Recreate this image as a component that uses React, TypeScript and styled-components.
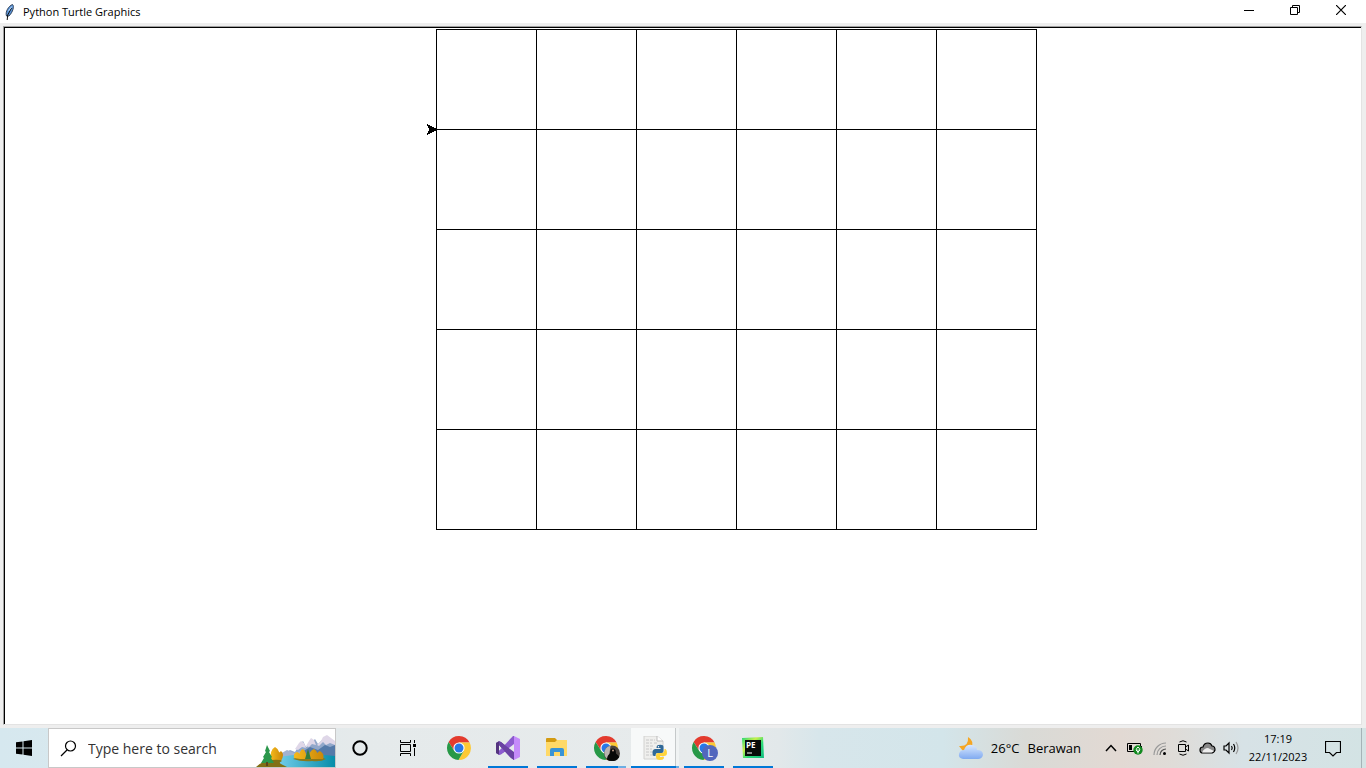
import React from "react";
import styled, { createGlobalStyle } from "styled-components";

const GlobalStyle = createGlobalStyle`
  * { box-sizing: border-box; }
  body { margin: 0; background: #fff; font-family: "Open Sans", "Noto Sans", sans-serif; color: #000; }
  button { font: inherit; color: inherit; border: 0; padding: 0; background: transparent; }
  svg { display: block; flex: none; }
`;

const Desktop = styled.div`
  min-height: 100vh;
  display: flex;
  flex-direction: column;
`;

const AppWindow = styled.main`
  flex: 1;
  display: flex;
  flex-direction: column;
  background: #eee;
`;

const TitleBar = styled.header`
  height: 23px;
  display: flex;
  align-items: center;
  background: #fff;
  padding: 0 2px 0 4px;
`;

const Title = styled.h1`
  flex: 1;
  margin: 0 0 0 7px;
  font-size: 11px;
  line-height: 16px;
  font-weight: 400;
`;

const WindowButton = styled.button`
  width: 46px;
  height: 23px;
  display: flex;
  align-items: center;
  justify-content: center;
  padding-bottom: 3px;
`;

const Canvas = styled.section`
  flex: 1;
  margin: 3px 4px 3px 3px;
  border: 1px solid #a0a0a0;
  border-right-color: #e3e3e3;
  border-bottom-color: #e3e3e3;
  background: #fff;
  display: flex;
`;

const Surface = styled.div`
  flex: 1;
  border-top: 1px solid #000;
  border-left: 1px solid #000;
  padding-left: 97px;
  display: flex;
  justify-content: center;
`;

const TaskBar = styled.footer`
  height: 40px;
  display: flex;
  background: linear-gradient(90deg, #d6e8ef 0%, #dce9ed 15%, #e5eaeb 26%, #e7ebec 52%, #e2e8ea 57%, #d7e6eb 60%, #d3e5ea 69%, #d9dad6 75%, #e2d9d3 82%, #dfdcd8 86%, #d7e2e6 91%, #d3e3e4 100%);
`;

const BarButton = styled.button`
  width: 48px;
  height: 40px;
  display: flex;
  align-items: center;
  justify-content: center;
`;

const NotificationButton = styled(BarButton)`
  width: 40px;
  margin-right: 8px;
`;

const SearchBox = styled.label`
  width: 288px;
  height: 40px;
  display: flex;
  align-items: center;
  background: #fff;
  border: 1px solid #c8c8c8;
  padding-left: 11px;
`;

const SearchInput = styled.input`
  flex: 1;
  min-width: 0;
  border: 0;
  outline: 0;
  padding: 2px 0 0;
  margin-left: 11px;
  background: transparent;
  font: 14px/20px "Open Sans", "Noto Sans", sans-serif;
  &::placeholder { color: #333; opacity: 1; }
`;

const SearchArt = styled.span`
  align-self: flex-end;
`;

const TaskList = styled.nav`
  display: flex;
  gap: 1px;
  padding-left: 3px;
  flex: 1;
`;

type TaskState = "idle" | "running" | "grouped" | "active";

const underline = {
  idle: "none",
  running: "linear-gradient(90deg, transparent 4px, #0078d7 4px 44px, transparent 44px)",
  grouped: "linear-gradient(90deg, transparent 4px, #0078d7 4px 36px, #6caee3 36px 44px, transparent 44px)",
  active: "linear-gradient(90deg, #0078d7 45px, #6caee3 45px)",
};

const TaskButton = styled(BarButton)<{ $state: TaskState }>`
  background:
    ${({ $state }) => underline[$state]} bottom / 100% 2px no-repeat,
    ${({ $state }) => ($state === "active" ? "linear-gradient(90deg, #f7f9f9 44px, #c5c9ca 44px 45px, #f0f3f3 45px)" : "none")};
`;

const Weather = styled.button`
  display: flex;
  align-items: center;
  gap: 8px;
  font-size: 13px;
  line-height: 20px;
  margin-right: 18px;
`;

const Tray = styled.div`
  display: flex;
  align-items: center;
`;

const TrayButton = styled.button`
  width: 24px;
  height: 40px;
  display: flex;
  align-items: center;
  justify-content: center;
`;

const Clock = styled.button`
  width: 70px;
  font-size: 11px;
  line-height: 18px;
  text-align: center;
`;

const ShowDesktop = styled.button`
  width: 5px;
  height: 40px;
  border-left: 1px solid #a5b3b7;
`;

const Feather = () => (
  <svg width="12" height="18" viewBox="0 0 12 18">
    <path d="M2.500 13C1 9 4.500 3 8.500 1.500 10.500 3 9 9 5 13Z" fill="#5b94d8" stroke="#26364c" strokeWidth=".9" />
    <path d="M7.500 5 3.700 12 3.200 17" fill="none" stroke="#111" />
    <path d="M7.800 3.500 4.500 8" stroke="#b9d8fa" />
  </svg>
);

const TurtleDrawing = () => (
  <svg width="611" height="502" viewBox="0 0 611 502" shapeRendering="crispEdges" role="img" aria-label="Grid of squares">
    <g stroke="#000" fill="none">
      {[0, 1, 2, 3, 4, 5].map((row) => (
        <path key={row} d={`M10 ${row * 100 + 1.5}H611`} />
      ))}
      {[0, 1, 2, 3, 4, 5, 6].map((column) => (
        <path key={column} d={`M${column * 100 + 10.5} 1V502`} />
      ))}
    </g>
    <path d="M1 96h1v1h2v1h2v1h2v1h2v1h2v1h-2v1h-2v1h-2v1h-2v1h-2v1h-1v-2h1v-2h1v-3h-1v-2h-1z" />
  </svg>
);

const Chrome = ({ badge }: { badge?: "photo" | "letter" }) => (
  <svg width="28" height="26" viewBox="-2 -1 28 26">
    <path d="M12 6.500H22.600A12 12 0 0 0 1.600 6L7.200 14.700Z" fill="#e33b2e" />
    <path d="M16.800 14.700 11.500 24A12 12 0 0 0 22.600 6.500H12Z" fill="#fcc934" />
    <path d="M7.200 14.700 1.600 6A12 12 0 0 0 11.500 24L16.800 14.700Z" fill="#279847" />
    <circle cx="12" cy="12" r="5.600" fill="#fff" />
    <circle cx="12" cy="12" r="4.500" fill="#2878e8" />
    {badge === "photo" && (
      <g>
        <circle cx="18" cy="17.500" r="8" fill="#49423e" />
        <path d="M10.500 15q2-5 6-5l-1 7-2 6q-4-3-3-8z" fill="#b9b4b1" />
        <path d="M13 23.500q0-4 3-6 0-5 3-5t3 5q3 2 3 4-5 6-12 2z" fill="#080808" />
        <circle cx="19" cy="14.500" r="1" fill="#bd9986" />
      </g>
    )}
    {badge === "letter" && (
      <g>
        <circle cx="18" cy="17" r="8" fill="#5267bd" />
        <text x="18" y="21" textAnchor="middle" fontSize="11" fill="#fff" fontFamily="Open Sans, sans-serif">L</text>
      </g>
    )}
  </svg>
);

const VisualStudio = () => (
  <svg width="24" height="24" viewBox="0 0 24 24">
    <path d="M0 7 3 5 5 6 18 17V24L14 21 3 9V15L7 12 10 15 4 18.500 3 19 0 17Z" fill="#6d46a6" />
    <path d="M0 7 3 5.500V18.500L0 17Z" fill="#54347f" />
    <path d="M3 18.500V15L17 0 18 0V8L5 18.500Z" fill="#8c5bce" />
    <path d="M3 5.500 5 6 18 16V24L15 22 3 9Z" fill="#6a42a3" />
    <path d="M18 0 24 3V21L18 24Z" fill="#c58bfa" />
  </svg>
);

const Explorer = () => (
  <svg width="22" height="20" viewBox="0 0 22 20">
    <path d="M0 1q0-1 1-1h8l2 2v4H0z" fill="#d39b12" />
    <path d="M0 4h9l2-2h10v16H0z" fill="#ffd967" />
    <path d="M4 18v-6q0-2 2-2h10q2 0 2 2v6h-4v-4H8v4z" fill="#3994d5" />
  </svg>
);

const PythonFile = () => (
  <svg width="24" height="24" viewBox="0 0 24 24">
    <path d="M1 0H14L20 5V23H1Z" fill="#efefed" stroke="#d2d2d0" />
    <path d="M14 0v5h6" fill="#fff" stroke="#bbb" />
    <path d="M3 4h9M3 7h6m2 0h3M3 10h7M3 13h6M3 16h7M3 19h8" stroke="#c8c8c8" strokeDasharray="3 1" />
    <path d="M15.500 9q5-1 5 2v4q0 2-2 2h-4q-2 0-2 3h-1.500q-1.500 0-1.500-3.500t3-3.500h5v-1h-4q0-3 2-3z" fill="#306998" />
    <path d="M21.500 13h1q1.500 1 1.500 4t-3 3h-4v1h4q0 3-4 3-4 0-4-3v-2q0-2 2-2h4q2.500 0 2.500-4z" fill="#ffd43b" />
    <circle cx="15.500" cy="10.800" r=".7" fill="#fff" />
  </svg>
);

const PyCharm = () => (
  <svg width="22" height="22" viewBox="0 0 22 22">
    <defs>
      <linearGradient id="edge" x2="1" y2="1">
        <stop stopColor="#20d67a" /><stop offset=".35" stopColor="#c8f04a" /><stop offset=".6" stopColor="#2cdb78" /><stop offset="1" stopColor="#10bb80" />
      </linearGradient>
    </defs>
    <path d="M0 1 21 0 22 21H1Z" fill="url(#edge)" />
    <path d="M3 3h16v16H3z" fill="#080c09" />
    <text x="4" y="11" fontSize="8" fontWeight="700" fill="#fff" fontFamily="Open Sans, sans-serif">PE</text>
    <path d="M5 16h5" stroke="#fff" />
  </svg>
);

const Scenery = () => (
  <svg width="79" height="34" viewBox="0 0 79 34">
    <defs>
      <linearGradient id="river" x2="1"><stop stopColor="#72cdea" /><stop offset="1" stopColor="#078da9" /></linearGradient>
      <linearGradient id="leaves" x2="1"><stop stopColor="#f6b91c" /><stop offset="1" stopColor="#c98708" /></linearGradient>
    </defs>
    <path d="M25 23 34 17 39 19 42 14 47 8 50 14 54 11 59 6 62 11 68 5 71 3 79 9V26H25Z" fill="#91a7ca" />
    <path d="M39 16 43 10 45 8 48 10 50 15 46 14 42 17ZM50 13 53 8 55 5 58 7 60 12 56 11 53 14ZM61 12 65 8 67 4 71 2 79 8V12L74 10 70 12 67 9 63 13Z" fill="#dfd7e8" />
    <path d="M46 19 54 14 62 17 69 12 74 14 79 12V25H46Z" fill="#557aa9" />
    <path d="M24 21 31 17 38 20 45 18 51 22 45 24H25Z" fill="#a2b2d1" />
    <path d="M22 24Q50 19 79 23V34H22Z" fill="url(#river)" />
    <path d="M37 26Q42 23 50 24 61 22 70 26 65 29 56 28 46 29 37 26Z" fill="#8b7818" />
    <g fill="url(#leaves)">
      <path d="M38 25q-1-5 3-6 4 1 3 7zM43 26q0-9 4-10 4 3 3 10zM54 26q-2-8 4-10 5 3 3 10zM60 26q0-7 4-8 5 3 3 8z" />
      <path d="M15 29q-2-12 4-15 6 3 5 15zM21 28q0-8 4-10 4 3 0 10z" />
    </g>
    <path d="M52 16 55 26H49Z" fill="#347c3e" />
    <path d="M0 34Q6 28 15 27 24 26 26 28 21 30 27 32L31 34Z" fill="#817015" />
    <path d="M11 12 14 18 13 19 16 24 15 25 18 30H5L8 25 7 24 10 19 9 18Z" fill="#2b974b" />
    <path d="M11 29v4" stroke="#5a451c" strokeWidth="2" />
  </svg>
);

const Glyph = ({ children, width = 18, height = 18 }: { children: React.ReactNode; width?: number; height?: number }) => (
  <svg width={width} height={height} viewBox={`0 0 ${width} ${height}`} fill="none" stroke="#000" strokeWidth="1.200">{children}</svg>
);

export default function App() {
  return (
    <Desktop>
      <GlobalStyle />
      <AppWindow>
        <TitleBar>
          <Feather />
          <Title>Python Turtle Graphics</Title>
          <WindowButton aria-label="Minimize"><Glyph width={10} height={10}><path d="M0 5.500H10" strokeWidth="1" /></Glyph></WindowButton>
          <WindowButton aria-label="Restore"><Glyph width={10} height={10}><path d="M.5 2.500h7v7h-7zM2.500 2.500v-2h7v7h-2" strokeWidth="1" /></Glyph></WindowButton>
          <WindowButton aria-label="Close"><Glyph width={10} height={10}><path d="M0 0 10 10M10 0 0 10" /></Glyph></WindowButton>
        </TitleBar>
        <Canvas><Surface><TurtleDrawing /></Surface></Canvas>
      </AppWindow>
      <TaskBar>
        <BarButton aria-label="Start">
          <Glyph width={16} height={16}><path d="M0 2.300 6.500 1.400V7.500H0ZM7.500 1.200 16 0V7.500H7.500ZM0 8.500H6.500V14.600L0 13.700ZM7.500 8.500H16V16L7.500 14.800Z" fill="#000" stroke="none" /></Glyph>
        </BarButton>
        <SearchBox>
          <Glyph width={17} height={17}><circle cx="10.500" cy="6" r="5" /><path d="M7 10 1 16" /></Glyph>
          <SearchInput aria-label="Search" placeholder="Type here to search" />
          <SearchArt><Scenery /></SearchArt>
        </SearchBox>
        <BarButton aria-label="Cortana"><Glyph width={16} height={16}><circle cx="8" cy="8" r="6.700" strokeWidth="2" /></Glyph></BarButton>
        <BarButton aria-label="Task view">
          <Glyph width={18} height={16}><path d="M1.500 0V2.500H11.500V0M1.500 16V13.500H11.500V16M1.500 4.500h10v7h-10zM15.500 0V3M15.500 8V16" strokeWidth="1" /><path d="M14 4h3v3h-3z" fill="#000" stroke="none" /></Glyph>
        </BarButton>
        <TaskList aria-label="Applications">
          <TaskButton $state="idle" aria-label="Chrome"><Chrome /></TaskButton>
          <TaskButton $state="running" aria-label="Visual Studio"><VisualStudio /></TaskButton>
          <TaskButton $state="running" aria-label="File Explorer"><Explorer /></TaskButton>
          <TaskButton $state="grouped" aria-label="Chrome, personal"><Chrome badge="photo" /></TaskButton>
          <TaskButton $state="active" aria-label="Python"><PythonFile /></TaskButton>
          <TaskButton $state="running" aria-label="Chrome, profile L"><Chrome badge="letter" /></TaskButton>
          <TaskButton $state="running" aria-label="PyCharm"><PyCharm /></TaskButton>
        </TaskList>
        <Weather>
          <svg width="25" height="24" viewBox="0 0 25 24">
            <defs><linearGradient id="cloud" x2="0" y2="1"><stop stopColor="#d8e8ff" /><stop offset="1" stopColor="#80aaf0" /></linearGradient></defs>
            <path d="M10 1Q17 5 13 13L5 15 1 10Q11 11 10 1Z" fill="#f5a623" />
            <path d="M5 23Q0 22 1 18 2 14 6 14 8 8 14 9 19 10 19 14 25 14 25 19 24 23 20 23Z" fill="url(#cloud)" />
          </svg>
          <span>26°C</span>
          <span>Berawan</span>
        </Weather>
        <Tray>
          <TrayButton aria-label="Show hidden icons"><Glyph width={12} height={8}><path d="M1 7 6 1.500 11 7" strokeWidth="1.500" /></Glyph></TrayButton>
          <TrayButton aria-label="Battery">
            <Glyph width={16} height={14}><path d="M.5 2.500h13v8H.5zM14.500 5v3" strokeWidth="1" /><path d="M2 4h3v5H2z" fill="#000" stroke="none" /><circle cx="11" cy="9" r="4.700" fill="#138a20" stroke="none" /><path d="M11 12.500V8.500M11 11Q7.500 9 11 6 14.500 9 11 11" stroke="#fff" strokeWidth="1" /></Glyph>
          </TrayButton>
          <TrayButton aria-label="Network"><Glyph width={13} height={13}><path d="M1 13A12 12 0 0 1 13 1M4 13A9 9 0 0 1 13 4" stroke="#999" /><path d="M7 13A6 6 0 0 1 13 7" stroke="#555" /><circle cx="11.500" cy="11.500" r="1.500" fill="#000" stroke="none" /></Glyph></TrayButton>
          <TrayButton aria-label="Meet now"><Glyph width={13} height={16}><path d="M1.500 4.500h7v7h-7zM8.500 7 11.500 5v6L8.500 9M2.500 2Q6-.5 9.500 2M2.500 14Q6 16.500 9.500 14" strokeWidth="1" /></Glyph></TrayButton>
          <TrayButton aria-label="OneDrive"><Glyph width={17} height={12}><path d="M4 11Q1 11 1 8 1 5 4 5 5 1 9 1 12 1 13 4 16 4 16 8 15 11 12 11Z" fill="#888" /><path d="M3 10.500Q5 6 9 6L15 9 13 10.500Z" fill="#eee" stroke="none" /></Glyph></TrayButton>
          <TrayButton aria-label="Volume"><Glyph width={17} height={14}><path d="M1 5H3L6 2V12L3 9H1ZM8.500 5Q10 7 8.500 9M10.500 3Q13 7 10.500 11" /><path d="M13 1Q17 7 13 13" stroke="#999" /></Glyph></TrayButton>
          <Clock>17:19<br />22/11/2023</Clock>
          <NotificationButton aria-label="Notifications"><Glyph width={16} height={17}><path d="M.5 1.500h15v11h-4L8 16 4.500 12.500h-4z" /></Glyph></NotificationButton>
          <ShowDesktop aria-label="Show desktop" />
        </Tray>
      </TaskBar>
    </Desktop>
  );
}
